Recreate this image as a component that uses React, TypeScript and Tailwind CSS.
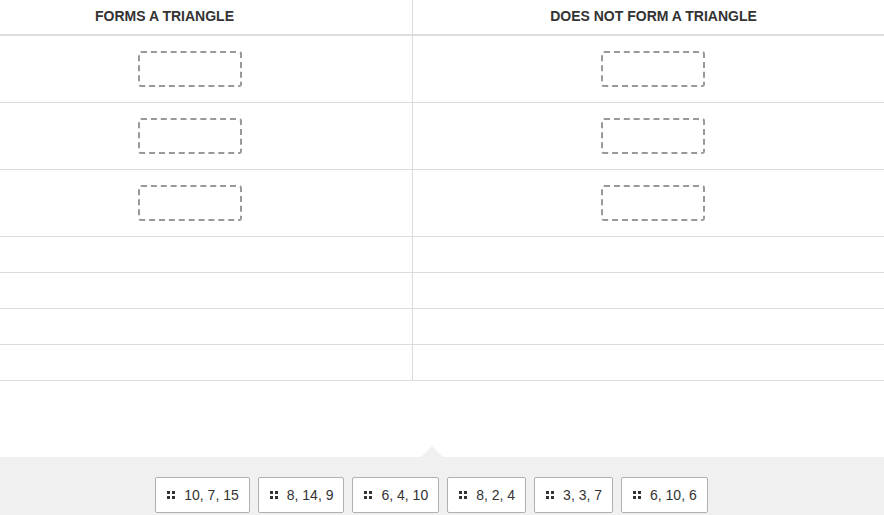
import React from 'react';

const ROWS = [
    { tall: true },
    { tall: true },
    { tall: true },
    { tall: false },
    { tall: false },
    { tall: false },
    { tall: false },
];

const CHIPS = ['10, 7, 15', '8, 14, 9', '6, 4, 10', '8, 2, 4', '3, 3, 7', '6, 10, 6'];

function Grip() {
    return (
        <span className="grid grid-cols-2 gap-[2px] w-[8px] shrink-0">
            <span className="w-[3px] h-[3px] bg-[#333]" />
            <span className="w-[3px] h-[3px] bg-[#333]" />
            <span className="w-[3px] h-[3px] bg-[#333]" />
            <span className="w-[3px] h-[3px] bg-[#333]" />
        </span>
    );
}

function DropSlot() {
    return <div className="w-[104px] h-[36px] border-2 border-dashed border-[#999] rounded-[3px]" />;
}

export default function App() {
    return (
        <div className="w-[884px] h-[515px] bg-white flex flex-col overflow-hidden text-[#333]" style={{ fontFamily: '"Liberation Sans", Arial, sans-serif' }}>
            {/* Table */}
            <div className="flex-1">
                <div className="flex h-[36px] border-b-2 border-[#dcdcdc]">
                    <div className="w-[413px] border-r border-[#dcdcdc] flex items-center justify-center pr-[83px] pb-[2px] text-[14px] font-bold">
                        FORMS A TRIANGLE
                    </div>
                    <div className="flex-1 flex items-center justify-center pl-[10px] pb-[2px] text-[14px] font-bold">
                        DOES NOT FORM A TRIANGLE
                    </div>
                </div>
                {ROWS.map((r, i) => (
                    <div key={i} className={`flex border-b border-[#dcdcdc] ${r.tall ? 'h-[67px]' : 'h-[36px]'}`}>
                        <div className="w-[413px] border-r border-[#dcdcdc] flex items-center justify-center pr-[32px] pb-px">
                            {r.tall && <DropSlot />}
                        </div>
                        <div className="flex-1 flex items-center justify-center pl-[9px] pb-px">
                            {r.tall && <DropSlot />}
                        </div>
                    </div>
                ))}
            </div>

            {/* Answer tray */}
            <div className="relative h-[58px] bg-[#f0f0f0] pt-[20px] pr-[21px] flex justify-center gap-[8px]">
                <div className="absolute left-[421px] -top-[11px] w-0 h-0 border-l-[11px] border-r-[11px] border-b-[11px] border-l-transparent border-r-transparent border-b-[#f0f0f0]" />
                {CHIPS.map(c => (
                    <div key={c} className="h-[36px] bg-white border border-[#b0b0b0] rounded-[2px] flex items-center gap-[9px] pl-[11px] pr-[10px] text-[14px] text-[#333]">
                        <Grip />
                        <span>{c}</span>
                    </div>
                ))}
            </div>
        </div>
    );
}
